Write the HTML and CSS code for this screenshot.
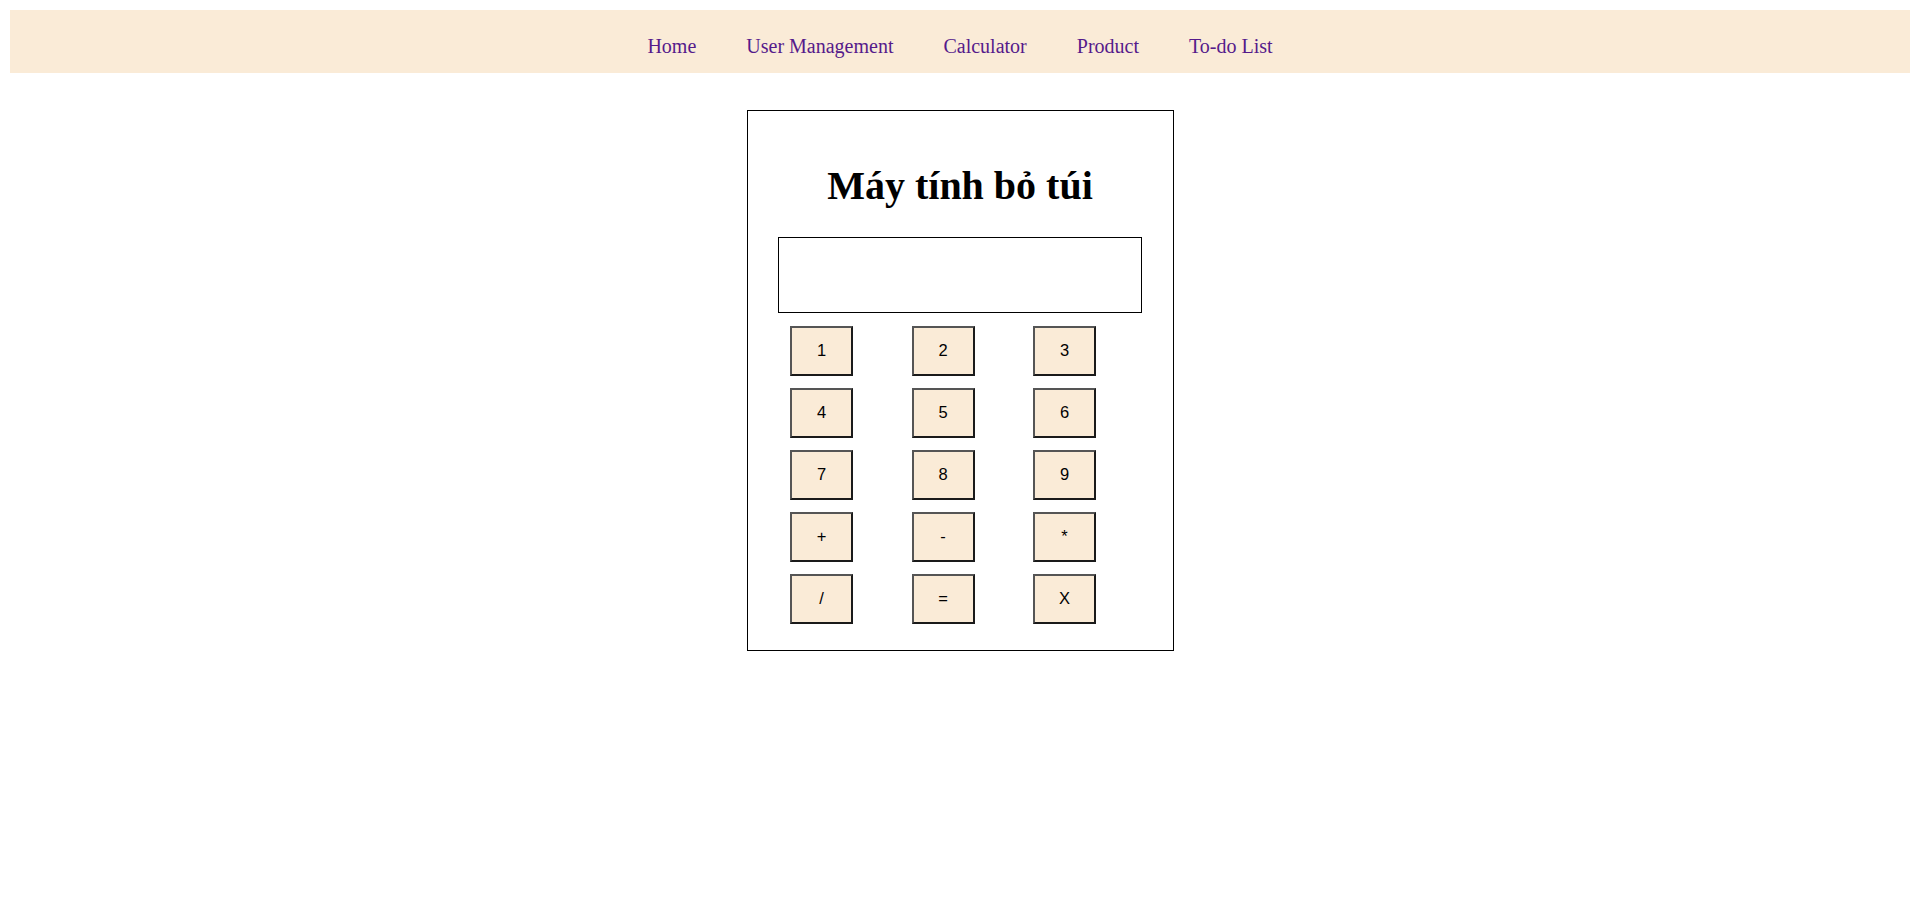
FILE: index.html
```html
<!DOCTYPE html>
<html lang="vi">
<head>
<meta charset="utf-8">
<title>Máy tính bỏ túi</title>
<link rel="stylesheet" href="styles.css">
</head>
<body>
<nav class="topnav">
  <a class="nav-link" href="#">Home</a>
  <a class="nav-link" href="#">User Management</a>
  <a class="nav-link" href="#">Calculator</a>
  <a class="nav-link" href="#">Product</a>
  <a class="nav-link" href="#">To-do List</a>
</nav>
<main class="calc">
  <h1 class="calc-title">Máy tính bỏ túi</h1>
  <div class="calc-display"></div>
  <div class="calc-keys">
    <button class="key">1</button>
    <button class="key">2</button>
    <button class="key">3</button>
    <button class="key">4</button>
    <button class="key">5</button>
    <button class="key">6</button>
    <button class="key">7</button>
    <button class="key">8</button>
    <button class="key">9</button>
    <button class="key">+</button>
    <button class="key">-</button>
    <button class="key">*</button>
    <button class="key">/</button>
    <button class="key">=</button>
    <button class="key">X</button>
  </div>
</main>
</body>
</html>
```
FILE: styles.css
```css
html, body {
  background: #ffffff;
}
body {
  margin: 10px;
  font-family: "Liberation Serif", "Times New Roman", serif;
}
.topnav {
  background: #faebd7;
  display: flex;
  justify-content: center;
  padding: 25px 0 15.5px;
  line-height: 22px;
  font-size: 20px;
}
.nav-link {
  color: #551a8b;
  text-decoration: none;
  padding: 0 25px;
}
.calc {
  width: 427px;
  box-sizing: border-box;
  margin: 37.5px auto 0;
  border: 1px solid #000;
  padding: 0 30px 26px;
}
.calc-title {
  margin: 53px 0 29px;
  font-size: 40px;
  line-height: 44px;
  font-weight: bold;
  text-align: center;
  color: #000;
}
.calc-display {
  height: 76px;
  box-sizing: border-box;
  border: 1px solid #000;
  width: 364px;
}
.calc-keys {
  display: grid;
  grid-template-columns: repeat(3, 63px);
  column-gap: 58.5px;
  row-gap: 12.5px;
  margin: 13px 0 0 12.5px;
}
.key {
  width: 63px;
  height: 49.5px;
  margin: 0;
  padding: 0;
  background: #faebd7;
  border: 2px solid;
  border-color: #555555 #1a1a1a #1a1a1a #555555;
  font-family: "Liberation Sans", Arial, sans-serif;
  font-size: 16.5px;
  color: #000;
}
```
